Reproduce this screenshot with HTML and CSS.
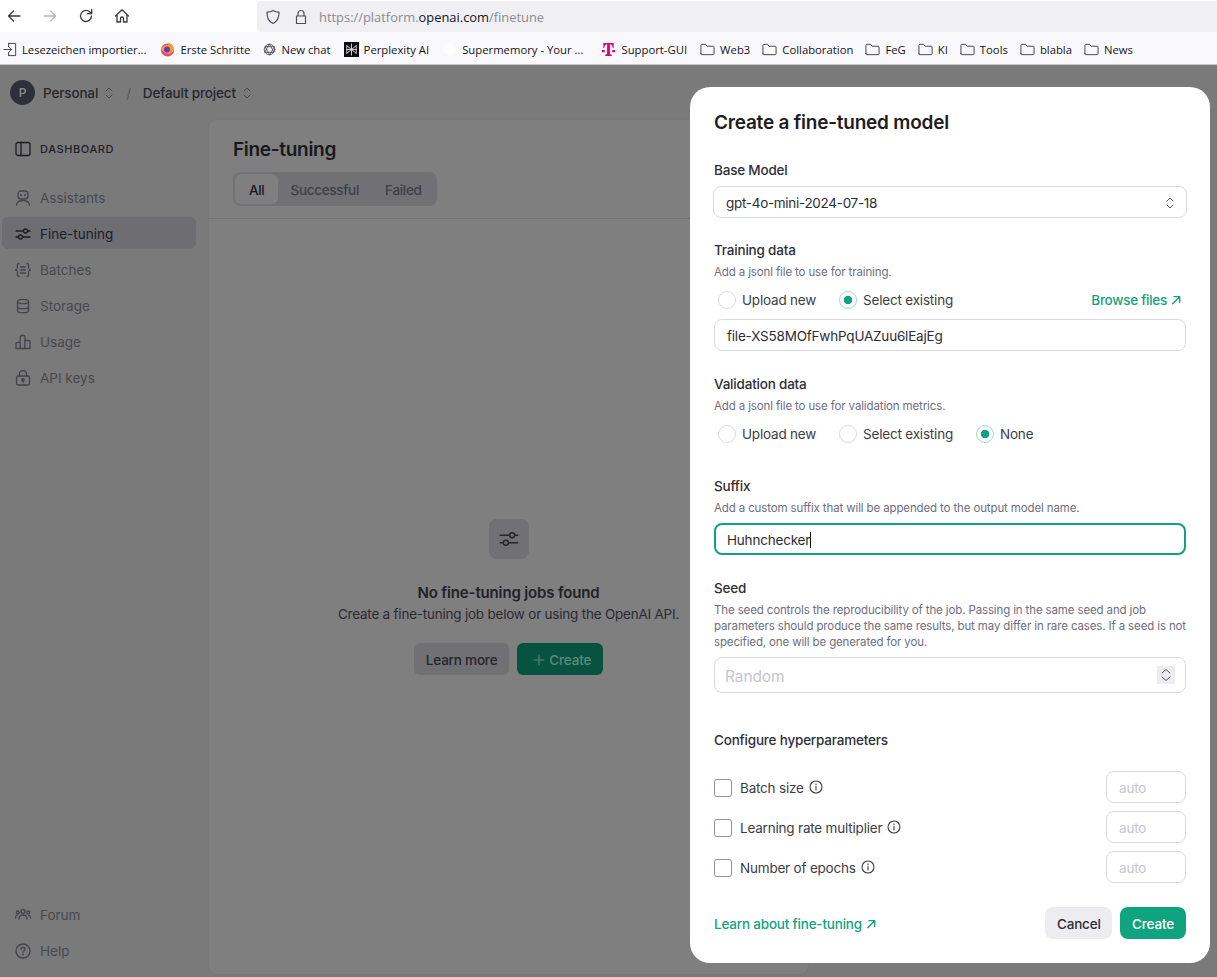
FILE: index.html
```html
<!DOCTYPE html>
<html lang="de">
<head>
<meta charset="utf-8">
<title>Fine-tuning</title>
<link rel="stylesheet" href="styles.css">
</head>
<body>
<header class="browser">
  <div class="toolbar">
    <div class="nav-buttons">
      <svg class="tb-icon" viewBox="0 0 16 16"><path d="M14 8H2.5M7.5 3 2.5 8l5 5"/></svg>
      <svg class="tb-icon off" viewBox="0 0 16 16"><path d="M2 8h11.5M8.5 3l5 5-5 5"/></svg>
      <svg class="tb-icon" viewBox="0 0 16 16"><path d="M13.5 8A5.5 5.5 0 1 1 11.6 3.8L13.5 5.5M13.7 1.5v4.2H9.5"/></svg>
      <svg class="tb-icon" viewBox="0 0 16 16"><path d="M1.5 8 8 1.800 14.500 8M3 6.800V14h3.500v-3.500a1.500 1.500 0 0 1 3 0V14H13V6.800"/></svg>
    </div>
    <div class="urlbar">
      <svg class="url-icon" viewBox="0 0 16 16"><path d="M8 1.500c2 1.200 4 1.600 6 1.700 0 5-1.500 9.300-6 11.300C3.500 12.500 2 8.200 2 3.200c2-.1 4-.5 6-1.700z"/></svg>
      <svg class="url-icon" viewBox="0 0 16 16"><path d="M5 7V4.500a3 3 0 0 1 6 0V7M3.500 7h9v7.500h-9z"/></svg>
      <span class="url"><span class="url-dim">https://platform.</span>openai.com<span class="url-dim">/finetune</span></span>
    </div>
  </div>
  <nav class="bookmarks">
    <a class="bm bm-first"><svg class="bm-icon line" viewBox="0 0 16 16"><path d="M6 1.500h7.500v13H6M6 5V1.500M6 14.500V11M1 8h8M6.500 5.500 9 8l-2.500 2.500"/></svg>Lesezeichen importier...</a>
    <a class="bm"><svg class="bm-icon" viewBox="0 0 16 16"><circle cx="8" cy="8.500" r="7" fill="#e8467c"/><path d="M1.500 7C3 13 12 15 15 8.500 15 4 12 1.500 9 .5c1 2-1 3-2 3S3 3.500 1.500 7z" fill="#ff9a2e"/><circle cx="7.500" cy="8" r="3.200" fill="#5a3dc4"/></svg>Erste Schritte</a>
    <a class="bm"><svg class="bm-icon small line" viewBox="0 0 16 16"><circle cx="8" cy="8" r="6.500"/><path d="M8 1.500 13.500 11.500H2.500zM8 14.500 2.500 4.500h11z"/></svg>New chat</a>
    <a class="bm"><svg class="bm-icon" viewBox="0 0 16 16"><rect width="16" height="16" fill="#0c0c0c"/><path d="M8 2v12M3 4l10 8M13 4 3 12M3 4v8M13 4v8M3 8h10" stroke="#d8d8d8" fill="none"/></svg>Perplexity AI</a>
    <a class="bm"><svg class="bm-icon" viewBox="0 0 16 16"><circle cx="8" cy="8" r="6.500" fill="#fdfdfe"/></svg>Supermemory - Your ...</a>
    <a class="bm bm-t"><svg class="bm-icon" viewBox="0 0 16 16"><path d="M2.500 1h11v5.500h-1c0-2.500-1-4-3-4.200V12c0 1.200.5 1.500 2 1.500V15H4.500v-1.500c1.500 0 2-.3 2-1.500V2.300c-2 .2-3 1.700-3 4.200h-1z" fill="#e20074"/><path d="M1 8.500h3v2.500H1zM12 8.500h3v2.500h-3z" fill="#e20074"/></svg>Support-GUI</a>
    <a class="bm"><svg class="bm-icon line" viewBox="0 0 16 16"><path d="M1 12.500V3.500C1 3 1.400 2.500 2 2.500h4l1.500 2H14c.6 0 1 .4 1 1v7c0 .6-.4 1-1 1H2c-.6 0-1-.4-1-1z"/></svg>Web3</a>
    <a class="bm"><svg class="bm-icon line" viewBox="0 0 16 16"><path d="M1 12.500V3.500C1 3 1.400 2.500 2 2.500h4l1.500 2H14c.6 0 1 .4 1 1v7c0 .6-.4 1-1 1H2c-.6 0-1-.4-1-1z"/></svg>Collaboration</a>
    <a class="bm"><svg class="bm-icon line" viewBox="0 0 16 16"><path d="M1 12.500V3.500C1 3 1.400 2.500 2 2.500h4l1.500 2H14c.6 0 1 .4 1 1v7c0 .6-.4 1-1 1H2c-.6 0-1-.4-1-1z"/></svg>FeG</a>
    <a class="bm"><svg class="bm-icon line" viewBox="0 0 16 16"><path d="M1 12.500V3.500C1 3 1.400 2.500 2 2.500h4l1.500 2H14c.6 0 1 .4 1 1v7c0 .6-.4 1-1 1H2c-.6 0-1-.4-1-1z"/></svg>KI</a>
    <a class="bm"><svg class="bm-icon line" viewBox="0 0 16 16"><path d="M1 12.500V3.500C1 3 1.400 2.500 2 2.500h4l1.500 2H14c.6 0 1 .4 1 1v7c0 .6-.4 1-1 1H2c-.6 0-1-.4-1-1z"/></svg>Tools</a>
    <a class="bm"><svg class="bm-icon line" viewBox="0 0 16 16"><path d="M1 12.500V3.500C1 3 1.400 2.500 2 2.500h4l1.500 2H14c.6 0 1 .4 1 1v7c0 .6-.4 1-1 1H2c-.6 0-1-.4-1-1z"/></svg>blabla</a>
    <a class="bm"><svg class="bm-icon line" viewBox="0 0 16 16"><path d="M1 12.500V3.500C1 3 1.400 2.500 2 2.500h4l1.500 2H14c.6 0 1 .4 1 1v7c0 .6-.4 1-1 1H2c-.6 0-1-.4-1-1z"/></svg>News</a>
  </nav>
</header>

<div class="app">
  <div class="topbar">
    <span class="avatar">P</span>
    <span class="crumb">Personal</span>
    <svg class="updown" viewBox="0 0 12 16"><path d="M3 6l3-3 3 3M3 10l3 3 3-3"/></svg>
    <span class="slash">/</span>
    <span class="crumb">Default project</span>
    <svg class="updown" viewBox="0 0 12 16"><path d="M3 6l3-3 3 3M3 10l3 3 3-3"/></svg>
  </div>
  <div class="workspace">
    <aside class="sidebar">
      <div class="side-head">
        <svg class="nav-icon strong" viewBox="0 0 16 16"><rect x="1" y="1.500" width="14" height="13" rx="2"/><path d="M6 1.500v13"/></svg>
        <span>DASHBOARD</span>
      </div>
      <ul class="nav">
        <li class="nav-item"><svg class="nav-icon" viewBox="0 0 16 16"><rect x="3" y="1" width="10" height="8" rx="3"/><path d="M1.500 15c.5-3 3-4.500 6.500-4.500s6 1.500 6.500 4.500"/><path class="thick" d="M6 4.500v1M10 4.500v1"/></svg>Assistants</li>
        <li class="nav-item active"><svg class="nav-icon" viewBox="0 0 16 16"><path d="M1 5h7.500M12.500 5H15M1 11h2.500M7.500 11H15"/><circle cx="10.500" cy="5" r="2"/><circle cx="5.500" cy="11" r="2"/></svg>Fine-tuning</li>
        <li class="nav-item"><svg class="nav-icon" viewBox="0 0 16 16"><path d="M4 1.500C2 1.500 2.500 3 2.500 5S2.500 7.500.5 8c2 .5 2 1 2 3s-.5 3.500 1.500 3.500M12 1.500c2 0 1.500 1.500 1.500 3.500s0 2.500 2 3c-2 .5-2 1-2 3s.5 3.500-1.500 3.500M5.500 5h5M5.500 8h5M5.500 11h5"/></svg>Batches</li>
        <li class="nav-item"><svg class="nav-icon" viewBox="0 0 16 16"><ellipse cx="8" cy="3.500" rx="5.500" ry="2.200"/><path d="M2.500 3.500v9c0 1.200 2.500 2.200 5.500 2.200s5.500-1 5.500-2.200v-9M2.500 8.500c0 1.200 2.500 2.200 5.500 2.200s5.500-1 5.500-2.200"/></svg>Storage</li>
        <li class="nav-item"><svg class="nav-icon" viewBox="0 0 16 16"><path d="M1 14.500V9.500c0-.8.5-1.200 1-1.200h3.200M5.200 14.500V3c0-1 .8-1.500 1.500-1.500h1.700c.8 0 1.500.6 1.500 1.500v11.500M10 6.500h3.500c.8 0 1.500.6 1.500 1.500v6.500H1"/></svg>Usage</li>
        <li class="nav-item"><svg class="nav-icon" viewBox="0 0 16 16"><rect x="1.500" y="6" width="13" height="9" rx="1.500"/><path d="M4.500 6V4a3.500 3.500 0 0 1 7 0v2"/><circle class="fill" cx="8" cy="9.800" r="1.200"/><path d="M8 10v2.500"/></svg>API keys</li>
      </ul>
      <ul class="nav nav-bottom">
        <li class="nav-item"><svg class="nav-icon" viewBox="0 0 16 16"><circle cx="8" cy="4.500" r="2"/><circle cx="2.800" cy="5.500" r="1.500"/><circle cx="13.200" cy="5.500" r="1.500"/><path d="M4 12c0-2.500 1.500-4 4-4s4 1.500 4 4M.5 11c0-1.500.5-2.500 2-3M15.500 11c0-1.500-.5-2.500-2-3"/></svg>Forum</li>
        <li class="nav-item"><svg class="nav-icon" viewBox="0 0 16 16"><circle cx="8" cy="8" r="7"/><path d="M6 6.300C6 5 7 4.500 8 4.500s2 .7 2 1.800c0 1.500-2 1.500-2 3M8 11v1"/></svg>Help</li>
      </ul>
    </aside>
    <main class="main">
      <div class="main-head">
        <h1>Fine-tuning</h1>
        <div class="tabs">
          <span class="tab selected">All</span>
          <span class="tab">Successful</span>
          <span class="tab">Failed</span>
        </div>
      </div>
      <div class="empty">
        <span class="empty-icon"><svg viewBox="0 0 16 16"><path d="M1 5h7.500M12.500 5H15M1 11h2.500M7.500 11H15"/><circle cx="10.500" cy="5" r="2"/><circle cx="5.500" cy="11" r="2"/></svg></span>
        <h2>No fine-tuning jobs found</h2>
        <p>Create a fine-tuning job below or using the OpenAI API.</p>
        <div class="empty-actions">
          <span class="dim-btn grey">Learn more</span>
          <span class="dim-btn green"><svg viewBox="0 0 12 12"><path d="M6 1v10M1 6h10"/></svg>Create</span>
        </div>
      </div>
    </main>
  </div>
</div>

<section class="modal">
  <h2 class="modal-title">Create a fine-tuned model</h2>

  <div class="field field-base">
    <label class="label">Base Model</label>
    <div class="control select"><span>gpt-4o-mini-2024-07-18</span>
      <svg class="updown dark" viewBox="0 0 12 16"><path d="M3 6l3-3 3 3M3 10l3 3 3-3"/></svg></div>
  </div>

  <div class="field field-training">
    <label class="label">Training data</label>
    <p class="hint">Add a jsonl file to use for training.</p>
    <div class="radios">
      <span class="radio"><i class="dot"></i>Upload new</span>
      <span class="radio on"><i class="dot"></i>Select existing</span>
      <a class="link browse">Browse files <svg class="arrow" viewBox="0 0 12 12"><path d="M2 10.500 10 2.500M3.500 2H10.500V9"/></svg></a>
    </div>
    <div class="control text">file-XS58MOfFwhPqUAZuu6lEajEg</div>
  </div>

  <div class="field field-validation">
    <label class="label">Validation data</label>
    <p class="hint">Add a jsonl file to use for validation metrics.</p>
    <div class="radios">
      <span class="radio"><i class="dot"></i>Upload new</span>
      <span class="radio"><i class="dot"></i>Select existing</span>
      <span class="radio on"><i class="dot"></i>None</span>
    </div>
  </div>

  <div class="field field-suffix">
    <label class="label">Suffix</label>
    <p class="hint">Add a custom suffix that will be appended to the output model name.</p>
    <div class="control text focused">Huhnchecker<i class="caret"></i></div>
  </div>

  <div class="field field-seed">
    <label class="label">Seed</label>
    <p class="hint">The seed controls the reproducibility of the job. Passing in the same seed and job parameters should produce the same results, but may differ in rare cases. If a seed is not specified, one will be generated for you.</p>
    <div class="control seed"><span class="placeholder">Random</span>
      <span class="spinner"><svg viewBox="0 0 18 18"><path d="M5 7l4-3.500L13 7M5 11l4 3.500L13 11"/></svg></span></div>
  </div>

  <div class="field field-hyper">
    <label class="label">Configure hyperparameters</label>
    <div class="params">
      <div class="param"><i class="check"></i><span class="param-name">Batch size</span><svg class="info" viewBox="0 0 14 14"><circle cx="7" cy="7" r="6"/><path d="M7 6.500V10M7 3.800v1"/></svg><span class="mini">auto</span></div>
      <div class="param"><i class="check"></i><span class="param-name">Learning rate multiplier</span><svg class="info" viewBox="0 0 14 14"><circle cx="7" cy="7" r="6"/><path d="M7 6.500V10M7 3.800v1"/></svg><span class="mini">auto</span></div>
      <div class="param"><i class="check"></i><span class="param-name">Number of epochs</span><svg class="info" viewBox="0 0 14 14"><circle cx="7" cy="7" r="6"/><path d="M7 6.500V10M7 3.800v1"/></svg><span class="mini">auto</span></div>
    </div>
  </div>

  <div class="modal-foot">
    <a class="link">Learn about fine-tuning <svg class="arrow" viewBox="0 0 12 12"><path d="M2 10.500 10 2.500M3.500 2H10.500V9"/></svg></a>
    <button class="btn cancel">Cancel</button>
    <button class="btn create">Create</button>
  </div>
</section>
</body>
</html>
```
FILE: styles.css
```css
* { box-sizing: border-box; }
html, body { height: 100%; }
body {
  margin: 0;
  height: 977px;
  overflow: hidden;
  position: relative;
  background: #7a7a7a;
  font-family: Inter, "Liberation Sans", sans-serif;
  color: #1c1c21;
  display: flex;
  flex-direction: column;
}
svg { display: block; fill: none; stroke: currentColor; stroke-linecap: round; stroke-linejoin: round; }
h1, h2, p, ul { margin: 0; padding: 0; }
ul { list-style: none; }

/* Browser chrome */
.browser { flex: none; height: 65px; background: #fff; }
.toolbar { height: 32px; display: flex; align-items: stretch; padding-top: 1px; }
.nav-buttons { width: 257px; display: flex; align-items: center; gap: 20px; padding: 0 0 2px 6px; }
.tb-icon { width: 16px; height: 16px; color: #3a3a40; stroke-width: 1.300; }
.tb-icon.off { color: #b8b8bc; }
.urlbar {
  flex: 1;
  display: flex;
  align-items: center;
  background: #f0f0f4;
  border-radius: 4px 0 0 4px;
  padding-left: 8px;
  gap: 12px;
}
.url-icon { width: 16px; height: 16px; color: #4f4f55; stroke-width: 1.200; }
.url { font-family: "Open Sans", sans-serif; font-size: 12.900px; color: #15141a; margin-left: -2px; }
.url-dim { color: #8b8b91; }
.bookmarks {
  height: 33px;
  background: #f9f9fb;
  border-bottom: 1px solid #c8c8ca;
  display: flex;
  align-items: center;
  padding: 3px 0 0 3px;
  gap: 13px;
  font-family: "Open Sans", sans-serif;
  font-size: 11.300px;
  color: #15141a;
}
.bm { display: flex; align-items: center; gap: 5px; white-space: nowrap; }
.bm-first { gap: 4px; margin-right: 1px; letter-spacing: -.04px; }
.bm-icon { width: 15px; height: 15px; stroke: none; flex: none; }
.bm-icon.small { width: 13px; height: 13px; }
.bm-icon.line { fill: none; stroke: #3d3d42; stroke-width: 1; }
.bm-t { margin-left: 5px; }
.bm-t ~ .bm + .bm { margin-left: -1px; }

/* App behind the dim overlay */
.app { flex: 1; display: flex; flex-direction: column; min-height: 0; }
.topbar {
  flex: none;
  height: 55px;
  display: flex;
  align-items: center;
  padding: 0 0 0 10px;
  font-size: 13.500px;
  letter-spacing: -.15px;
  font-weight: 500;
  color: #27272e;
}
.avatar {
  width: 25px;
  height: 25px;
  border-radius: 50%;
  background: #2f2f3b;
  color: #8d8d98;
  font-size: 12px;
  display: flex;
  align-items: center;
  justify-content: center;
  margin-right: 8px;
}
.updown { width: 12px; height: 16px; stroke-width: 1; color: #4a4a52; margin-left: 5px; }
.updown.dark { color: #55555e; margin: 0 -2px 0 0; }
.slash { color: #55555c; font-weight: 400; margin: 0 12px 0 11px; }
.workspace { flex: 1; display: flex; min-height: 0; padding-bottom: 3px; }
.sidebar { flex: none; width: 209px; display: flex; flex-direction: column; padding: 0 13px 8px 2px; }
.side-head {
  height: 60px;
  display: flex;
  align-items: center;
  gap: 9px;
  padding: 2px 0 0 13px;
  font-size: 11px;
  font-weight: 500;
  letter-spacing: .6px;
  color: #1f1f26;
  margin-bottom: 1px;
  margin-top: -2px;
}
.nav { display: flex; flex-direction: column; gap: 4px; margin-top: 2px; }
.nav-bottom { margin-top: auto; }
.nav-item {
  height: 32px;
  display: flex;
  align-items: center;
  gap: 9px;
  padding: 2px 0 0 13px;
  border-radius: 6px;
  font-size: 13.500px;
  color: #48484f;
}
.nav-item.active { background: #6d6d72; color: #1c1c26; }
.nav-icon { width: 16px; height: 16px; stroke-width: 1.300; color: #43434c; flex: none; }
.nav-item.active .nav-icon, .nav-icon.strong { color: #1c1c22; }
.thick { stroke-width: 1.600; }
.fill { fill: currentColor; }

.main {
  flex: none;
  width: 599px;
  background: #7f7f7f;
  border-radius: 8px;
  box-shadow: 0 0 0 1px #787878;
  display: flex;
  flex-direction: column;
}
.main-head { height: 99px; padding: 18px 0 0 24px; border-bottom: 1px solid #737373; }
.main-head h1 { font-size: 19px; font-weight: 600; line-height: 24px; color: #19191c; letter-spacing: -.3px; }
.tabs {
  display: inline-flex;
  margin-top: 10px;
  padding: 2px;
  height: 34px;
  background: #707075;
  border-radius: 8px;
  font-size: 13.500px;
  letter-spacing: -.3px;
  font-weight: 500;
  color: #3f3f47;
}
.tab { display: flex; align-items: center; padding: 2px 13px 0; border-radius: 6px; }
.tab.selected { background: #7f7f7f; color: #19191c; padding: 2px 14px 0; }
.tab.selected + .tab { padding-left: 12px; }
.empty { flex: 1; display: flex; flex-direction: column; align-items: center; padding-top: 300px; }
.empty-icon {
  width: 40px;
  height: 40px;
  border-radius: 8px;
  background: #707075;
  display: flex;
  align-items: center;
  justify-content: center;
  color: #25252b;
}
.empty-icon svg { width: 20px; height: 20px; stroke-width: 1.100; }
.empty h2 { font-size: 15px; letter-spacing: -.15px; font-weight: 600; line-height: 20px; margin-top: 24px; color: #212127; }
.empty p { font-size: 13.500px; letter-spacing: -.22px; line-height: 20px; margin-top: 1px; color: #2b2b32; }
.empty-actions { display: flex; gap: 8px; margin-top: 19px; }
.dim-btn {
  height: 32px;
  display: flex;
  align-items: center;
  justify-content: center;
  gap: 4px;
  padding: 2px 12px 0;
  border-radius: 6px;
  font-size: 13.500px;
  letter-spacing: -.2px;
  font-weight: 500;
}
.dim-btn.grey { background: #707075; color: #25252b; }
.dim-btn.green { background: #08533f; color: #5c8a7c; padding: 2px 12px 0 16px; }
.dim-btn svg { width: 12px; height: 12px; stroke-width: 1.100; }

/* Modal dialog */
.modal {
  position: absolute;
  left: 690px;
  top: 87px;
  width: 520px;
  height: 876px;
  background: #fff;
  border-radius: 20px;
  padding: 24px 24px 0;
  font-size: 13.500px;
  letter-spacing: -.2px;
  color: #3d3d47;
}
.modal-title { font-size: 19px; line-height: 24px; font-weight: 600; color: #1d1d22; letter-spacing: -.22px; }
.field { display: flex; flex-direction: column; }
.field-base { margin-top: 25px; }
.field-training { margin-top: 22px; }
.field-validation { margin-top: 23px; }
.field-suffix { margin-top: 32px; }
.field-seed { margin-top: 23px; }
.field-hyper { margin-top: 37px; }
.label { font-size: 13.500px; line-height: 20px; font-weight: 500; color: #2f2f38; }
.hint { font-size: 11.500px; letter-spacing: -.13px; line-height: 16px; color: #6e6e80; margin-top: 4px; }
.control {
  border: 1px solid #d9d9e3;
  border-radius: 8px;
  height: 32px;
  display: flex;
  align-items: center;
  padding: 0 12px;
  font-size: 13.500px;
  color: #2d2d35;
}
.control.text, .control.select { padding-top: 2px; }
.select { margin: 6px -1px 0; justify-content: space-between; letter-spacing: -.3px; }
.radios { display: flex; align-items: center; height: 20px; margin-top: 10px; padding-left: 4px; gap: 23px; }
.radio { display: flex; align-items: center; gap: 6px; color: #3d3d47; }
.dot { width: 18px; height: 18px; border-radius: 50%; border: 1px solid #d9d9e3; display: block; flex: none; }
.radio.on .dot { border-color: #a5d8c9; background: radial-gradient(circle, #10a37f 0 4px, #fff 4.500px); }
.link { color: #10a37f; font-weight: 500; display: inline-flex; align-items: center; gap: 4px; }
.arrow { width: 10px; height: 10px; stroke-width: 1.600; }
.browse { margin-left: auto; margin-right: 5px; letter-spacing: -.27px; }
.field-training .control { margin-top: 9px; }
.focused { border: 2px solid #10a37f; margin-top: 7px; padding-left: 11px; }
.caret { width: 1px; height: 16px; background: #111; display: block; }
.seed { height: 36px; margin-top: 7px; justify-content: space-between; padding: 0 10px; }
.placeholder { font-size: 15.500px; letter-spacing: -.1px; color: #c5c5d2; margin-top: 2px; }
.spinner { width: 18px; height: 18px; background: #ececf1; display: block; color: #55555e; }
.spinner svg { width: 18px; height: 18px; stroke-width: 1; }
.params { display: flex; flex-direction: column; gap: 8px; margin-top: 21px; }
.param { display: flex; align-items: center; height: 32px; color: #3d3d47; }
.param-name { margin-top: 2px; }
.check { width: 18px; height: 18px; border: 1px solid #8e8ea0; border-radius: 3px; display: block; margin: 2px 8px 0 0; flex: none; }
.info { width: 14px; height: 14px; stroke-width: 1.100; margin-left: 5px; color: #3d3d47; }
.mini {
  margin-left: auto;
  width: 80px;
  height: 32px;
  border: 1px solid #d9d9e3;
  border-radius: 8px;
  color: #c5c5d2;
  display: flex;
  align-items: center;
  padding: 2px 0 0 12px;
}
.modal-foot { display: flex; align-items: center; margin-top: 24px; gap: 8px; }
.modal-foot .link { margin-right: auto; padding-top: 2px; }
.btn {
  height: 32px;
  border: 0;
  border-radius: 8px;
  font: 500 13.500px Inter, "Liberation Sans", sans-serif;
  letter-spacing: -.2px;
  padding: 2px 12px 0;
}
.cancel { background: #ececf1; color: #2d2d35; width: 67px; }
.create { background: #10a37f; color: #fff; width: 66px; }
```
